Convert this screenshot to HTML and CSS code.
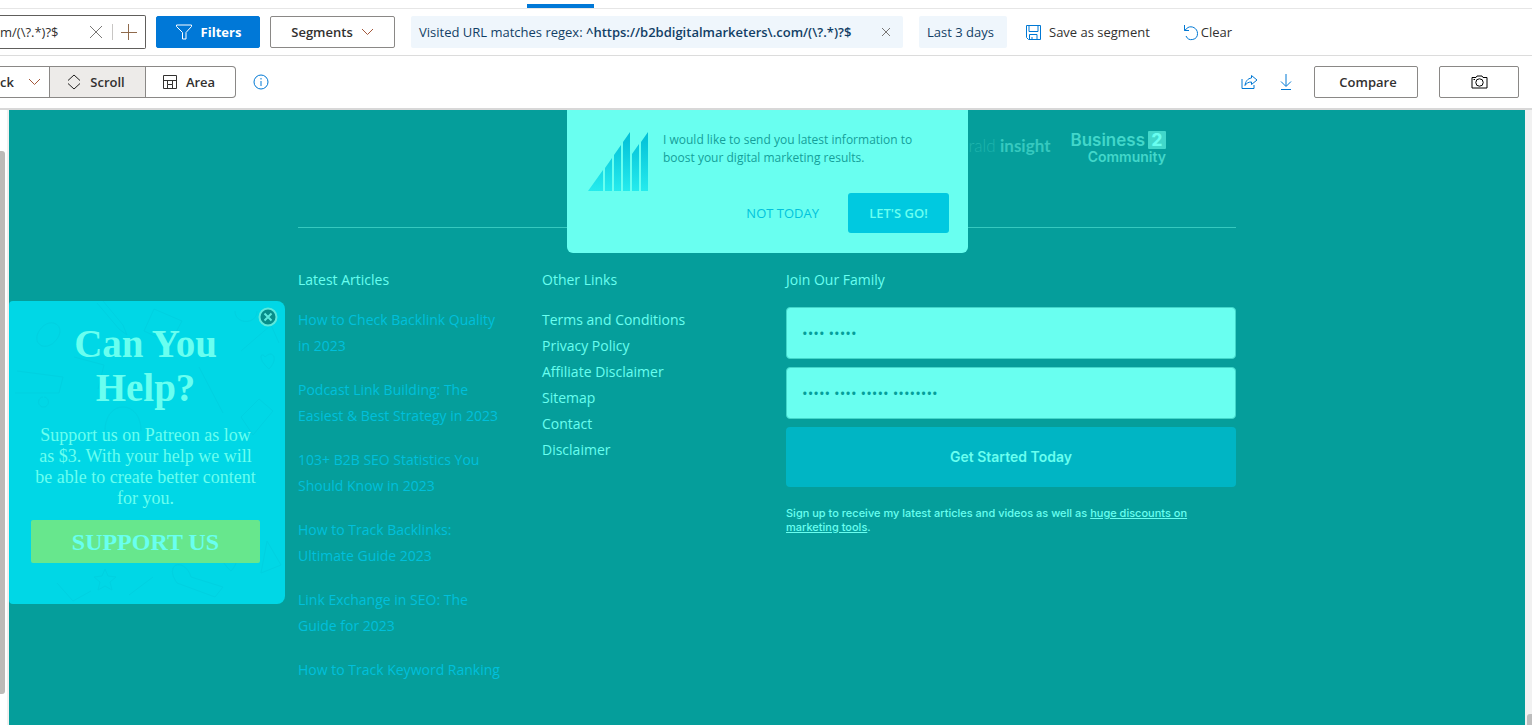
FILE: index.html
```html
<!DOCTYPE html>
<html lang="en">
<head>
<meta charset="utf-8">
<title>Heatmap</title>
<link rel="stylesheet" href="styles.css">
</head>
<body>
<div class="app">
  <div class="tabs"><span class="tab-active"></span></div>

  <header class="bar filter-bar">
    <div class="search">
      <input class="search-input" type="text" aria-label="Visited URL" value="m/(\?.*)?$">
      <button class="icon-btn" aria-label="Clear URL"><svg width="14" height="14" viewBox="0 0 14 14"><path d="M1 1l12 12M13 1L1 13"/></svg></button>
      <span class="search-sep"></span>
      <button class="icon-btn add" aria-label="Add"><svg width="18" height="18" viewBox="0 0 18 18"><path d="M1 9.500h16M8.500 1v16"/></svg></button>
    </div>
    <button class="btn primary"><svg width="18" height="16" viewBox="0 0 18 16"><path d="M1.500 1h15v1.500L11 8.500V15H7.500V8.500L1.500 2.500z"/></svg>Filters</button>
    <button class="btn segments">Segments<svg width="13" height="8" viewBox="0 0 13 8"><path d="M1 1l5.500 5.500L12 1"/></svg></button>
    <div class="chip regex"><span>Visited URL matches regex: <b>^https://b2bdigitalmarketers\.com/(\?.*)?$</b></span>
      <button class="icon-btn" aria-label="Remove filter"><svg width="10" height="10" viewBox="0 0 10 10"><path d="M1 1l8 8M9 1L1 9"/></svg></button>
    </div>
    <div class="chip days">Last 3 days</div>
    <button class="link-btn save"><svg width="15" height="15" viewBox="0 0 15 15"><path d="M.5.5h14v14h-12l-2-2zM3 .5v6h9v-6M3.500 14.500v-5h7.500v5M6 14.500V12"/></svg>Save as segment</button>
    <button class="link-btn clear"><svg width="16" height="17" viewBox="0 0 16 17"><path d="M1.500 1v5.500H6M1.500 6.500L5 3.500C8.500 1.500 14.500 4 14.500 9.500A6 6 0 0 1 3 12"/></svg>Clear</button>
  </header>

  <div class="bar view-bar">
    <div class="view-group">
      <button class="view click">ck<svg width="13" height="8" viewBox="0 0 13 8"><path d="M1 1l5.500 5.500L12 1"/></svg></button>
      <button class="view scroll"><svg width="14" height="16" viewBox="0 0 14 16"><path d="M1 6.500l6-5.500 6 5.500M1 9.500l6 5.500 6-5.500"/></svg>Scroll</button>
      <button class="view area"><svg width="14" height="14" viewBox="0 0 14 14"><path d="M.5.5h13v13H.5zM.5 5.500h13M4.500 13.500v-4h5v4M4.500 9.500v-4M9.500 9.500v-4"/></svg>Area</button>
    </div>
    <button class="icon-btn info" aria-label="Information"><svg width="16" height="16" viewBox="0 0 16 16"><circle cx="8" cy="8" r="7"/><path d="M8 7v5M8 4v1.500"/></svg></button>
    <span class="spacer"></span>
    <button class="icon-btn blue" aria-label="Share"><svg width="17" height="16" viewBox="0 0 17 16"><path d="M1 5v9.500h12V11M10.500 1.500L16 6l-5.500 4.500V8C7.500 8 5.500 9 4 11.500 4.500 7.500 6.500 4.500 10.500 4z"/></svg></button>
    <button class="icon-btn blue download" aria-label="Download"><svg width="12" height="18" viewBox="0 0 12 18"><path d="M6 1v12M1 8.500l5 5 5-5M1 16.500h10"/></svg></button>
    <button class="btn compare">Compare</button>
    <button class="btn camera" aria-label="Take screenshot"><svg width="17" height="14" viewBox="0 0 17 14"><path d="M1 2.500h4l1-1.500h5l1 1.500h4V13H1z"/><circle cx="8.500" cy="7.500" r="3.700"/><path d="M2.500 4.500h1.500"/></svg></button>
  </div>

  <main class="stage">
    <div class="gutter-left"><span class="thumb-left"></span></div>
    <div class="canvas">
      <div class="site">
        <div class="logos">
          <span class="emerald"><i>rald</i> <b>insight</b></span>
          <span class="b2c"><span class="b2c-top">Business <b>2</b></span><span>Community</span></span>
        </div>
        <div class="columns">
          <section>
            <h2>Latest Articles</h2>
            <ul class="articles">
              <li><a href="#">How to Check Backlink Quality in 2023</a></li>
              <li><a href="#">Podcast Link Building: The Easiest &amp; Best Strategy in 2023</a></li>
              <li><a href="#">103+ B2B SEO Statistics You Should Know in 2023</a></li>
              <li><a href="#">How to Track Backlinks: Ultimate Guide 2023</a></li>
              <li><a href="#">Link Exchange in SEO: The Guide for 2023</a></li>
              <li><a href="#">How to Track Keyword Ranking</a></li>
            </ul>
          </section>
          <section>
            <h2>Other Links</h2>
            <ul class="links">
              <li><a href="#">Terms and Conditions</a></li>
              <li><a href="#">Privacy Policy</a></li>
              <li><a href="#">Affiliate Disclaimer</a></li>
              <li><a href="#">Sitemap</a></li>
              <li><a href="#">Contact</a></li>
              <li><a href="#">Disclaimer</a></li>
            </ul>
          </section>
          <section>
            <h2>Join Our Family</h2>
            <form class="signup">
              <input type="text" aria-label="Name" placeholder="•••• •••••">
              <input type="text" aria-label="Email" placeholder="••••• •••• ••••• ••••••••">
              <button type="button">Get Started Today</button>
            </form>
            <p class="note">Sign up to receive my latest articles and videos as well as <a href="#">huge discounts on marketing tools</a>.</p>
          </section>
        </div>
      </div>

      <div class="popup">
        <svg class="popup-logo" width="61" height="60" viewBox="0 0 61 60">
          <defs><linearGradient id="bars" x1="0" y1="0" x2="0" y2="60" gradientUnits="userSpaceOnUse"><stop offset="0" stop-color="#00bdd6"/><stop offset="1" stop-color="#25ebed"/></linearGradient></defs>
          <path fill="url(#bars)" d="M0 60L15 39V60zM17 37L24 27V60H17zM26 24L33 14V60H26zM35 11L42 1V60H35zM44 23L51 13V60H44zM53 11L60 1V60H53z"/>
        </svg>
        <div class="popup-body">
          <p>I would like to send you latest information to boost your digital marketing results.</p>
          <div class="popup-actions"><button class="no">NOT TODAY</button><button class="go">LET'S GO!</button></div>
        </div>
      </div>

      <aside class="card">
        <svg class="doodles" width="276" height="304" viewBox="0 0 276 304" aria-hidden="true">
          <path d="M88 2l22 26 8 6-4-10L94 0M145 8l28 12-12 22-26-12zM226 10c0 14 22 14 22 0M30 30c10-16 28-6 18 8s-26 6-18-8M232 50l30-26 8 18M190 66l24 46M232 116l18-18 14 12-20 24zM8 70l46 6-4 16H6M34 96a5 5 0 1 0 1 0M65 56l30 8-6 24M96 130c0-32 36-32 36 0M256 56c8-8 14 2 4 12-12-10-8-18-4-12M44 246l12-18-10 22M100 222l-4 30 36-6M196 228l4 8 8 1-6 6 2 8-8-4-8 4 2-8-6-6 8-1zM96 268l3 7 8 1-6 5 2 8-7-4-7 4 2-8-6-5 8-1zM168 282c-14-20 8-26 14-6l32 10-8 10zM218 258c8-8 14 2 4 12-12-10-8-18-4-12M48 282l16 18 18-10M120 294l24-18M258 240l14 24-20 8z"/>
        </svg>
        <button class="card-close" aria-label="Close"><svg width="20" height="20" viewBox="0 0 20 20"><circle cx="10" cy="10" r="8.500"/><path d="M6.500 6.500l7 7M13.500 6.500l-7 7"/></svg></button>
        <h2>Can You Help?</h2>
        <p>Support us on Patreon as low as $3. With your help we will be able to create better content for you.</p>
        <button class="support">SUPPORT US</button>
      </aside>
    </div>
    <div class="gutter-right"><span class="thumb-right"></span></div>
  </main>
</div>
</body>
</html>
```
FILE: styles.css
```css
* { box-sizing: border-box; }
body { margin: 0; font: 13px/18px "Open Sans", "Noto Sans", sans-serif; color: #323130; background: #fff; overflow: hidden; }
button, input { font: inherit; color: inherit; margin: 0; }
button { padding: 0; border: 0; background: none; cursor: pointer; }
h2, p, ul { margin: 0; padding: 0; }
ul { list-style: none; }
svg { fill: none; stroke: currentColor; flex: none; }

.app { display: flex; flex-direction: column; height: 100vh; }
.tabs { height: 9px; padding-top: 4px; border-bottom: 1px solid #e6e6e6; flex: none; }
.tab-active { display: block; width: 67px; height: 4px; margin-left: 527px; background: #0078d7; }

.bar { display: flex; align-items: center; flex: none; white-space: nowrap; }
.filter-bar { height: 47px; border-bottom: 1px solid #dcdcdc; }
.view-bar { height: 54px; padding-right: 13px; border-bottom: 2px solid #d8d8d8; }

.icon-btn { display: inline-flex; color: #797775; }
.search { display: flex; align-items: center; width: 146px; height: 34px; padding-right: 7px; border: 1px solid #605e5c; border-left: 0; border-radius: 0 2px 2px 0; }
.search-input { flex: 1; min-width: 0; padding: 0; border: 0; outline: 0; background: none; }
.search-sep { width: 1px; height: 16px; margin: 0 7px 0 9px; background: #c8c6c4; }
.add { color: #8f6a4c; }

.btn { display: flex; align-items: center; justify-content: center; height: 32px; border: 1px solid #8a8886; border-radius: 2px; font-weight: 600; background: #fff; }
.primary { width: 104px; margin-left: 10px; gap: 8px; border-color: #0078d7; background: #0078d7; color: #fff; font-weight: 700; }
.segments { width: 125px; margin-left: 10px; gap: 8px; }
.segments svg, .click svg { color: #a4573a; }
.chip { display: flex; align-items: center; height: 32px; border-radius: 2px; background: #eff6fc; color: #123f66; }
.chip b { font-weight: 600; }
.regex { width: 492px; margin-left: 16px; padding: 0 12px 0 8px; justify-content: space-between; }
.days { width: 88px; margin-left: 16px; padding-left: 8px; }
.link-btn { display: flex; align-items: center; gap: 8px; }
.link-btn svg, .blue, .info { color: #0078d4; }
.save { margin-left: 19px; }
.clear { margin-left: 33px; gap: 2px; }

.view-group { display: flex; height: 32px; border: 1px solid #8a8886; border-left: 0; border-radius: 0 4px 4px 0; }
.view { display: flex; align-items: center; justify-content: center; font-weight: 600; }
.click { width: 49px; gap: 14px; justify-content: flex-start; }
.scroll { width: 97px; gap: 9px; padding-right: 3px; border: solid #8a8886; border-width: 0 1px; background: #edebe9; }
.area { width: 89px; gap: 9px; padding-right: 3px; }
.scroll svg { color: #201f1e; }
.info { margin-left: 17px; }
.spacer { flex: 1; }
.download { margin-left: 22px; }
.compare { width: 104px; margin-left: 22px; padding-left: 4px; }
.camera { width: 80px; margin-left: 21px; color: #000; }

.stage { display: flex; flex: 1; min-height: 0; }
.gutter-left { width: 9px; padding-top: 41px; border-right: 2px solid #f1f0ef; flex: none; }
.thumb-left { display: block; width: 5px; height: 543px; border-radius: 0 3px 3px 0; background: #bcbab7; }
.gutter-right { display: flex; flex-direction: column; justify-content: flex-end; width: 7px; padding-left: 2px; background: #f1f1f1; flex: none; }
.thumb-right { height: 11px; border-radius: 3px 0 0 0; background: #bdbdbd; }
.canvas { position: relative; flex: 1; overflow: hidden; background: #059e9b; color: #69fff0; }
.canvas a { color: inherit; text-decoration: none; }

.site { max-width: 938px; margin: 0 auto; font-size: 14px; line-height: 26px; }
.logos { display: flex; justify-content: flex-end; align-items: flex-start; gap: 20px; height: 118px; padding: 20px 70px 0 0; border-bottom: 1px solid #36c9bf; color: #42d7ca; }
.emerald { padding-top: 3px; font: 17px/26px Lato, sans-serif; color: #36c9bf; }
.emerald i { font-style: normal; font-weight: 300; color: #1fb4ad; }
.b2c { display: flex; flex-direction: column; align-items: flex-end; padding-top: 1px; font: 600 14px/16px Inter, sans-serif; }
.b2c-top { display: flex; align-items: center; gap: 3px; font-size: 17px; line-height: 18px; }
.b2c-top b { width: 18px; border-radius: 1px; background: #42d7ca; color: #69fff0; text-align: center; font-weight: 800; }
.columns { display: grid; grid-template-columns: 244px 244px 1fr; padding-top: 39px; }
.columns h2 { margin-bottom: 14px; font-size: 14px; font-weight: 400; }
.articles { display: grid; gap: 18px; padding-right: 38px; color: #00c0dc; }
.signup { display: grid; gap: 8px; }
.signup input { height: 52px; padding: 0 15px; border: 1px solid #42d7ca; border-radius: 4px; background: #69fff0; outline: 0; font-size: 15px; }
.signup input::placeholder { color: #059e9b; opacity: 1; }
.signup button { height: 60px; border-radius: 4px; background: #00b5c4; font: 600 14px/20px Inter, sans-serif; }
.note { margin-top: 19px; padding-right: 20px; font: 500 11px/14px Inter, sans-serif; }
.note a { text-decoration: underline; }

.popup { position: absolute; top: 0; left: 50%; display: flex; gap: 14px; width: 401px; height: 143px; margin-left: -200px; padding: 21px 19px 20px 21px; border-radius: 0 0 6px 6px; background: #69fff0; }
.popup-logo { stroke: none; }
.popup-body { display: flex; flex-direction: column; flex: 1; justify-content: space-between; font-size: 12px; }
.popup p { padding-right: 20px; color: #159f9a; }
.popup-actions { display: flex; justify-content: flex-end; gap: 29px; font-size: 13px; }
.no { color: #00c3dc; }
.go { width: 101px; height: 40px; border-radius: 3px; background: #00c9e0; color: #69fff0; font-weight: 600; }

.card { position: absolute; left: 0; top: 191px; width: 276px; padding: 21px 25px 41px 22px; border-radius: 4px 8px 8px 4px; background: #00d7e6; font-family: "Liberation Serif", serif; text-align: center; }
.doodles { position: absolute; left: 0; top: 0; color: #00d1e1; }
.card h2, .card p, .support { position: relative; }
.card h2 { padding: 0 30px; font-size: 39px; line-height: 44px; }
.card p { margin-top: 15px; padding: 0 1px; font-size: 18px; line-height: 21px; }
.support { width: 100%; height: 43px; margin-top: 11px; border-radius: 2px; background: #67e78d; font-size: 24px; font-weight: 700; }
.card-close { position: absolute; right: 7px; top: 6px; display: flex; }
.card-close svg { fill: #078e8a; stroke: #5de9dc; stroke-width: 2; }
```
